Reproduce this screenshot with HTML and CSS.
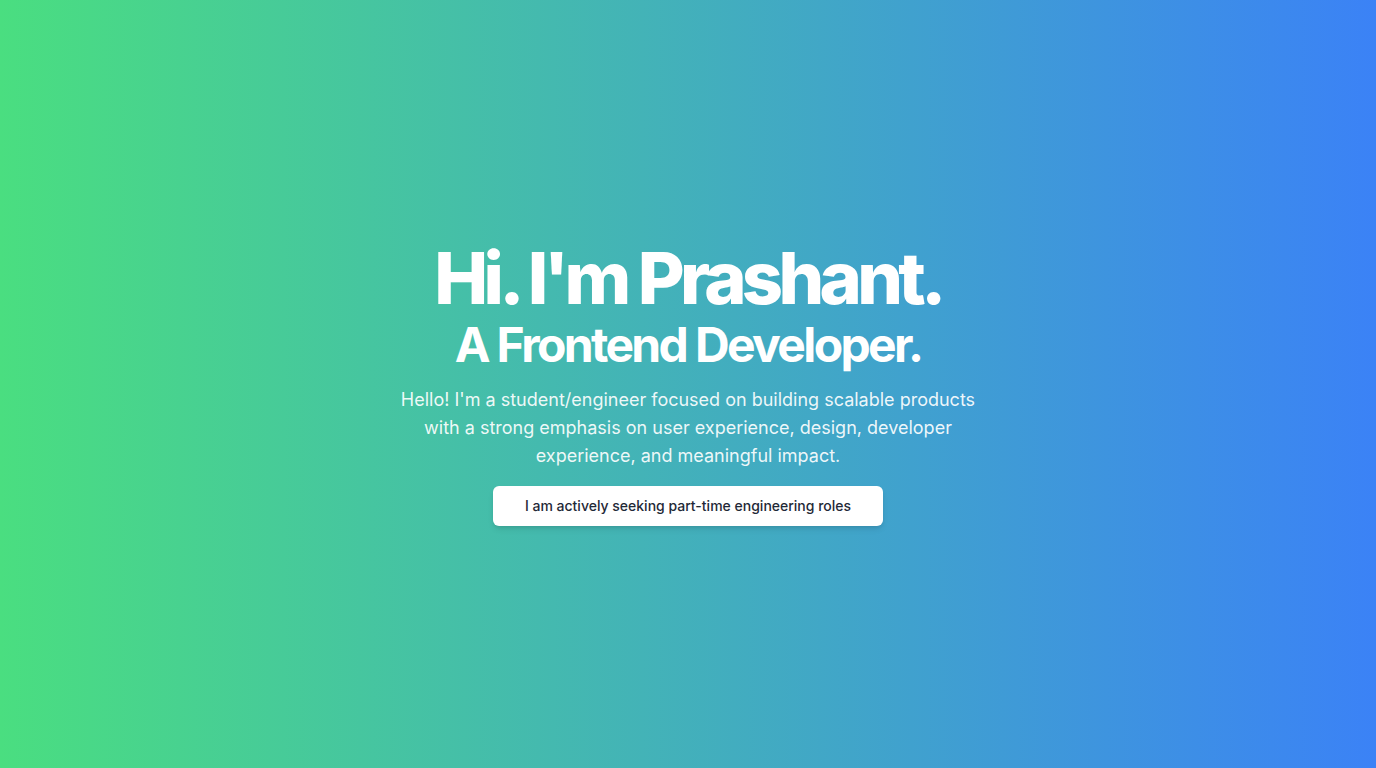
FILE: index.html
```html
<!DOCTYPE html>
<html lang="en">
<head>
<meta charset="utf-8">
<title>Prashant</title>
<link rel="stylesheet" href="styles.css">
</head>
<body>
<main class="hero">
  <div class="content">
    <h1 class="title">Hi. I'm Prashant.</h1>
    <h2 class="subtitle">A Frontend Developer.</h2>
    <p class="intro">Hello! I'm a student/engineer focused on building scalable products with a strong emphasis on user experience, design, developer experience, and meaningful impact.</p>
    <div class="badge">I am actively seeking part-time engineering roles</div>
  </div>
</main>
</body>
</html>
```

FILE: styles.css
```css
* { box-sizing: border-box; }
html, body { margin: 0; padding: 0; height: 100%; }
body {
  font-family: Inter, "Noto Sans", sans-serif;
}
.hero {
  min-height: 768px;
  background: linear-gradient(to right, #4ade80, #3b82f6);
  display: flex;
  align-items: center;
  justify-content: center;
}
.content {
  display: flex;
  flex-direction: column;
  align-items: center;
  text-align: center;
  color: #fff;
}
.title {
  margin: 0;
  font-size: 72px;
  line-height: 72px;
  font-weight: 800;
  letter-spacing: -0.065em;
}
.subtitle {
  margin: 6px 0 0;
  font-size: 48px;
  line-height: 50px;
  font-weight: 700;
  letter-spacing: -0.055em;
}
.intro {
  max-width: 576px;
  margin: 16px 0 0;
  font-size: 18px;
  line-height: 28px;
  color: rgba(255,255,255,0.92);
}
.badge {
  margin-top: 16px;
  width: 390px;
  padding: 10px 16px;
  background: #fff;
  color: #1f2937;
  font-size: 14px;
  line-height: 20px;
  font-weight: 500;
  border-radius: 6px;
  box-shadow: 0 4px 6px -1px rgba(0,0,0,0.1), 0 2px 4px -2px rgba(0,0,0,0.1);
}
```
